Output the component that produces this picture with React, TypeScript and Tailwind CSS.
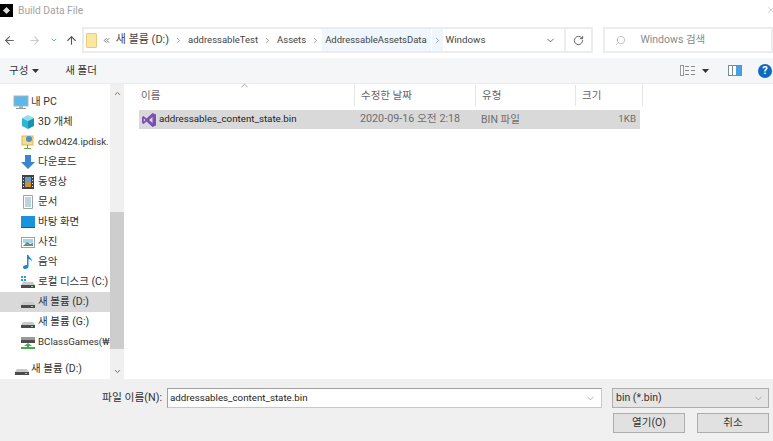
import { ArrowLeft, ArrowRight, ArrowUp, ChevronDown, ChevronRight, ChevronUp, ChevronsLeft, RotateCw, Search, X } from "lucide-react";
import type { ReactNode } from "react";

const font = { fontFamily: 'Roboto, "Noto Sans CJK KR", sans-serif' };

function Caret() {
  return <svg width="7" height="4" viewBox="0 0 7 4"><path d="M0 0h7L3.5 4z" fill="#333" /></svg>;
}

function DriveIcon() {
  return (
    <svg width="16" height="16" viewBox="0 0 16 16">
      <path d="M3 8h10l2 3H1z" fill="#c9c9c9" />
      <rect x="1" y="11" width="14" height="3" fill="#4c4c4c" />
      <rect x="11" y="12" width="2" height="1" fill="#8fd18f" />
    </svg>
  );
}

function PcIcon() {
  return (
    <svg width="16" height="16" viewBox="0 0 16 16">
      <rect x="1" y="2" width="14" height="10" fill="#5bb7e8" stroke="#a9b4bc" />
      <rect x="6" y="12" width="4" height="2" fill="#a9b4bc" />
      <rect x="3" y="14" width="10" height="1" fill="#8d979e" />
    </svg>
  );
}

function CubeIcon() {
  return (
    <svg width="16" height="16" viewBox="0 0 16 16">
      <path d="M8 1l6 3-6 3-6-3z" fill="#8fe0ee" />
      <path d="M2 4l6 3v8l-6-3z" fill="#2fb6d2" />
      <path d="M14 4l-6 3v8l6-3z" fill="#1593b3" />
    </svg>
  );
}

function NetFolderIcon() {
  return (
    <svg width="16" height="16" viewBox="0 0 16 16">
      <rect x="2" y="2" width="11" height="9" fill="#f6dc8b" stroke="#d9b955" />
      <circle cx="9" cy="5" r="3" fill="#4a90c8" />
      <rect x="7" y="11" width="1" height="3" fill="#6aa84f" />
      <rect x="4" y="14" width="7" height="1" fill="#6aa84f" />
    </svg>
  );
}

function DownloadIcon() {
  return (
    <svg width="16" height="16" viewBox="0 0 16 16">
      <path d="M5 1h6v7h4l-7 7-7-7h4z" fill="#3a84d0" />
    </svg>
  );
}

function VideoIcon() {
  return (
    <svg width="16" height="16" viewBox="0 0 16 16">
      <rect x="2" y="1" width="12" height="14" fill="#3d4348" />
      <rect x="5" y="3" width="6" height="5" fill="#5f9fd0" />
      <rect x="5" y="8" width="6" height="5" fill="#c8913f" />
      <path d="M3 3h1v1H3zM3 6h1v1H3zM3 9h1v1H3zM3 12h1v1H3zM12 3h1v1h-1zM12 6h1v1h-1zM12 9h1v1h-1zM12 12h1v1h-1z" fill="#dfe3e6" />
    </svg>
  );
}

function DocIcon() {
  return (
    <svg width="16" height="16" viewBox="0 0 16 16">
      <path d="M3.5 1.5h9v13h-9z" fill="#fff" stroke="#9aa4ab" />
      <path d="M5 4h6M5 6h6M5 8h6M5 10h6M5 12h6" stroke="#7fa8c6" />
    </svg>
  );
}

function DesktopIcon() {
  return (
    <svg width="16" height="16" viewBox="0 0 16 16">
      <rect x="1" y="2" width="14" height="11" fill="#1a93dc" />
      <rect x="1" y="13" width="14" height="1" fill="#0d5d94" />
    </svg>
  );
}

function PhotoIcon() {
  return (
    <svg width="16" height="16" viewBox="0 0 16 16">
      <rect x="1.5" y="3.5" width="13" height="10" fill="#fff" stroke="#9aa4ab" />
      <rect x="3" y="5" width="10" height="4" fill="#a8d5ee" />
      <path d="M3 12l4-4 3 2 3-1v3z" fill="#6f8f6f" />
    </svg>
  );
}

function MusicIcon() {
  return (
    <svg width="16" height="16" viewBox="0 0 16 16">
      <path d="M7 1h1.500c.3 2.500 3.500 3 3.500 6.500-.8-1.500-2-2.200-3.500-2.500V12.500C8.500 14 7 15 5.200 15 3.800 15 3 14.200 3 13.200 3 11.800 4.700 10.800 7 11z" fill="#1f86d6" />
    </svg>
  );
}

function SystemDriveIcon() {
  return (
    <svg width="16" height="16" viewBox="0 0 16 16">
      <path d="M1 2h2v2H1zM4 2h2v2H4zM1 5h2v2H1zM4 5h2v2H4z" fill="#1fa3e8" />
      <path d="M3 8h10l2 3H1z" fill="#c9c9c9" />
      <rect x="1" y="11" width="14" height="3" fill="#4c4c4c" />
      <rect x="11" y="12" width="2" height="1" fill="#8fd18f" />
    </svg>
  );
}

function NetDriveIcon() {
  return (
    <svg width="16" height="16" viewBox="0 0 16 16">
      <rect x="1" y="3" width="14" height="3" fill="#9a9a9a" />
      <rect x="1" y="6" width="14" height="3" fill="#4c4c4c" />
      <path d="M8 9l4 3H9v1h6v2H1v-2h6v-1H4z" fill="#3fae49" />
    </svg>
  );
}

function VsIcon() {
  return (
    <svg width="16" height="16" viewBox="0 0 16 16">
      <path d="M11.500 1L15 2.500v11L11.500 15 5.500 9.500 2.500 12 1 11V5l1.500-1 3 2.500zM11.500 5l-3.500 3 3.500 3zM2.800 6.300v3.400L4.500 8z" fill="#7b4fb5" fillRule="evenodd" />
    </svg>
  );
}

function ViewIcon() {
  return (
    <svg width="15" height="11" viewBox="0 0 15 11">
      <rect x="0.500" y="0.500" width="3" height="10" fill="#fff" stroke="#9a9a9a" />
      <path d="M5 1.500h4M11 1.500h4M5 5.500h4M11 5.500h4M5 9.500h4M11 9.500h4" stroke="#8a8a8a" />
    </svg>
  );
}

function PaneIcon() {
  return (
    <svg width="14" height="11" viewBox="0 0 14 11">
      <rect x="0.500" y="0.500" width="13" height="10" fill="#fff" stroke="#7d8a94" />
      <rect x="8" y="1" width="5" height="9" fill="#4a9fe0" />
      <path d="M4.500 1v9" stroke="#7d8a94" />
    </svg>
  );
}

type NavItem = { label: string; icon: ReactNode; selected?: boolean; latin?: boolean };

const navItems: NavItem[] = [
  { label: "3D 개체", icon: <CubeIcon /> },
  { label: "cdw0424.ipdisk.", icon: <NetFolderIcon />, latin: true },
  { label: "다운로드", icon: <DownloadIcon /> },
  { label: "동영상", icon: <VideoIcon /> },
  { label: "문서", icon: <DocIcon /> },
  { label: "바탕 화면", icon: <DesktopIcon /> },
  { label: "사진", icon: <PhotoIcon /> },
  { label: "음악", icon: <MusicIcon /> },
  { label: "로컬 디스크 (C:)", icon: <SystemDriveIcon /> },
  { label: "새 볼륨 (D:)", icon: <DriveIcon />, selected: true },
  { label: "새 볼륨 (G:)", icon: <DriveIcon /> },
  { label: "BClassGames(₩₩", icon: <NetDriveIcon />, latin: true },
];

function Sep({ hot }: { hot?: boolean }) {
  return (
    <div className={`flex h-full items-center justify-center ${hot ? "w-[12px] border-l border-white bg-[#eff6fd]" : "w-[11px]"}`}>
      <ChevronRight size={9} strokeWidth={1.5} className="text-[#666]" />
    </div>
  );
}

function ColHead({ label, width, sort }: { label: string; width: string; sort?: boolean }) {
  return (
    <div className={`relative flex h-[21px] items-center border-r border-[#e5e5e5] ${sort ? "pl-[2px]" : "pl-[6px]"} ${width}`}>
      {sort && <ChevronUp size={11} strokeWidth={1.5} className="absolute left-[100px] top-[-5px] text-[#777]" />}
      {label}
    </div>
  );
}

export default function App() {
  return (
    <div style={font} className="flex h-[441px] w-[773px] flex-col overflow-hidden bg-white text-[10.5px] text-[#333]">
      {/* title bar */}
      <div className="flex h-[27px] shrink-0 items-start">
        <div className="mt-[4px] flex h-[13px] w-[13px] items-center justify-center bg-black">
          <div className="h-[5px] w-[5px] rotate-45 bg-[#ddd]" />
        </div>
        <div className="ml-[5px] mt-[3px] text-[10.25px] text-[#a3a3a3]">Build Data File</div>
        <X size={10} strokeWidth={1} className="ml-auto mr-[-3px] mt-[5px] text-[#888]" />
      </div>

      {/* nav row */}
      <div className="flex h-[26px] shrink-0 items-center">
        <div className="flex w-[82px] items-center pl-[3px]">
          <ArrowLeft size={13} className="text-[#666]" />
          <ArrowRight size={13} className="ml-[12px] text-[#ccc]" />
          <ChevronDown size={8} strokeWidth={3} className="ml-[9px] text-[#6aa9dd]" />
          <ArrowUp size={13} className="ml-[7px] text-[#555]" />
        </div>
        <div className="flex h-[26px] w-[513px] items-center border-2 border-[#ececec] text-[#444]">
          <div className="ml-[2px] h-[15px] w-[11px] shrink-0 rounded-[1px] border border-[#e8cd78] bg-[#fbe7a4]" />
          <ChevronsLeft size={9} className="ml-[5px] shrink-0 text-[#444]" />
          <div className="ml-[1px] flex h-full items-center whitespace-nowrap">
            <div className="px-[4px] text-[11px]">새 볼륨 (D:)</div>
            <Sep />
            <div className="px-[4px] text-[9.5px]">addressableTest</div>
            <Sep />
            <div className="px-[4px] text-[9.5px]">Assets</div>
            <Sep />
            <div className="ml-[1px] flex h-full items-center bg-[#eff6fd] pl-[3px] pr-[4px] text-[9.5px]">AddressableAssetsData</div>
            <Sep hot />
            <div className="pl-[3px] text-[9.75px]">Windows</div>
          </div>
          <div className="ml-auto flex h-full items-center">
            <ChevronDown size={11} className="mr-[8px] text-[#666]" />
            <div className="flex h-full w-[27px] items-center justify-center border-l-2 border-[#ececec]">
              <RotateCw size={11} className="text-[#555]" />
            </div>
          </div>
        </div>
        <div className="ml-[10px] flex h-[26px] w-[170px] items-center border-2 border-[#ececec] text-[#8a8a8a]">
          <Search size={11} strokeWidth={1.25} className="ml-[10px] -scale-x-100 text-[#999]" />
          <span className="ml-[14px]">Windows 검색</span>
        </div>
      </div>

      {/* toolbar */}
      <div className="mt-[5px] flex h-[26px] shrink-0 items-center border-b border-[#eaebec] bg-[#f5f6f7] pl-[9px]">
        <span>구성</span>
        <span className="ml-[4px]"><Caret /></span>
        <span className="ml-[26px]">새 폴더</span>
        <div className="ml-auto flex items-center">
          <ViewIcon />
          <span className="ml-[7px]"><Caret /></span>
          <span className="ml-[19px]"><PaneIcon /></span>
          <div className="ml-[16px] mr-[1px] flex h-[14px] w-[14px] items-center justify-center rounded-full bg-[#1069c0] text-[11px] font-bold leading-none text-white">?</div>
        </div>
      </div>

      {/* body */}
      <div className="flex min-h-0 flex-1">
        <div className="w-[110px] shrink-0 overflow-hidden pt-[8px]">
          <div className="flex h-[20px] items-center whitespace-nowrap pl-[13px]">
            <PcIcon />
            <span className="ml-[2px]">내 PC</span>
          </div>
          {navItems.map((item) => (
            <div
              key={item.label}
              className={`flex h-[20px] items-center whitespace-nowrap pl-[20px] ${item.selected ? "bg-[#d9d9d9]" : ""}`}
            >
              <span className="shrink-0">{item.icon}</span>
              <span className={`ml-[2px] ${item.latin ? "text-[9.75px]" : ""}`}>{item.label}</span>
            </div>
          ))}
          <div className="mt-[7px] flex h-[20px] items-center whitespace-nowrap pl-[14px]">
            <DriveIcon />
            <span className="ml-[1px]">새 볼륨 (D:)</span>
          </div>
        </div>

        {/* scrollbar */}
        <div className="flex w-[14px] shrink-0 flex-col bg-[#f0f0f0]">
          <div className="flex h-[16px] items-center justify-center pt-[3px]">
            <ChevronUp size={9} strokeWidth={2.5} className="text-[#666]" />
          </div>
          <div className="mt-[112px] h-[137px] bg-[#cdcdcd]" />
          <div className="mt-auto flex h-[16px] items-center justify-center">
            <ChevronDown size={9} strokeWidth={2.5} className="text-[#666]" />
          </div>
        </div>

        {/* file list */}
        <div className="min-w-0 flex-1 pl-[15px]">
          <div className="flex pt-[1px] text-[#666]">
            <ColHead label="이름" width="w-[216px]" sort />
            <ColHead label="수정한 날짜" width="w-[121px]" />
            <ColHead label="유형" width="w-[100px]" />
            <ColHead label="크기" width="w-[67px]" />
          </div>
          <div className="mt-[4px] flex h-[19px] w-[501px] items-center bg-[#d9d9d9]">
            <div className="flex w-[215px] items-center pl-[2px]">
              <VsIcon />
              <span className="ml-[2px] text-[9.75px] text-[#222]">addressables_content_state.bin</span>
            </div>
            <div className="w-[121px] pl-[6px] text-[10.75px] text-[#6d6d6d]">2020-09-16 오전 2:18</div>
            <div className="w-[100px] pl-[6px] text-[#6d6d6d]">BIN 파일</div>
            <div className="flex-1 pr-[4px] text-right text-[9.75px] text-[#6d6d6d]">1KB</div>
          </div>
        </div>
      </div>

      {/* footer */}
      <div className="flex h-[62px] shrink-0 bg-[#f0f0f0] pt-[9px]">
        <div className="w-[162px] pt-[2px] text-right text-[10.75px]">파일 이름(N):</div>
        <div className="ml-[5px] flex h-[20px] w-[435px] items-center justify-between border border-[#a0a0a0] border-b-[#c8c8c8] border-r-[#c8c8c8] bg-white pl-[2px] pr-[5px] text-[9.75px] text-[#222]">
          addressables_content_state.bin
          <ChevronDown size={11} strokeWidth={1} className="text-[#666]" />
        </div>
        <div className="ml-[10px] flex w-[157px] flex-col">
          <div className="flex h-[20px] items-center justify-between border border-[#adadad] bg-[#e5e5e5] pl-[3px] pr-[4px]">
            bin (*.bin)
            <ChevronDown size={11} strokeWidth={1} className="text-[#666]" />
          </div>
          <div className="mt-[5px] flex justify-between">
            <div className="ml-[1px] flex h-[20px] w-[72px] items-center justify-center border border-[#adadad] bg-[#e1e1e1]">열기(O)</div>
            <div className="flex h-[20px] w-[72px] items-center justify-center border border-[#adadad] bg-[#e1e1e1]">취소</div>
          </div>
        </div>
      </div>
    </div>
  );
}
